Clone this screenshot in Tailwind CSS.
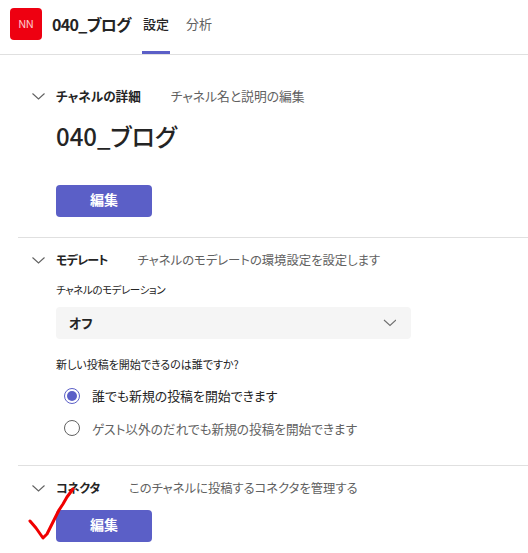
<!DOCTYPE html>
<html lang="ja">
<head>
<meta charset="utf-8">
<title>040_ブログ</title>
<script src="https://cdn.jsdelivr.net/npm/@tailwindcss/browser@4"></script>
</head>
<body class="bg-white text-[#242424] font-['Noto_Sans_CJK_JP','Noto_Sans',sans-serif] [font-feature-settings:'palt']">
<div class="relative w-[528px] h-[553px] overflow-hidden">

  <!-- header -->
  <header class="h-[55px] border-b border-[#e0e0e0] flex pl-[10px]">
    <div class="w-[32px] h-[32px] mt-[8px] rounded-[4px] bg-[#ee0011] text-white/80 text-[10px] flex items-center justify-center font-['Inter']">NN</div>
    <h1 class="ml-[10px] mt-[12px] w-[80px] whitespace-nowrap text-[16px] tracking-[-0.7px] leading-[24px] font-bold">040_ブログ</h1>
    <div class="relative ml-[10px] w-[28px] mt-[12px] text-[13px] leading-[23px] font-medium text-center">設定
      <div class="absolute left-0 right-0 top-[39px] h-[3px] bg-[#5b5fc7]"></div>
    </div>
    <div class="ml-[16px] mt-[12px] text-[13px] leading-[23px] text-[#616161]">分析</div>
  </header>

  <!-- channel details -->
  <section class="h-[183px] ml-[18px] border-b border-[#e0e0e0] pl-[14px] pt-[30px]">
    <div class="flex items-center h-[22px]">
      <svg class="w-[16px] h-[16px]" viewBox="0 0 16 16" fill="none" stroke="#616161" stroke-width="1.1"><path d="M0.5 5.5 6.5 11 12.5 5.5"/></svg>
      <span class="ml-[8px] text-[12.6px] font-bold">チャネルの詳細</span>
      <span class="ml-[30px] text-[12.8px] text-[#616161]">チャネル名と説明の編集</span>
    </div>
    <div class="ml-[24px] mt-[11px] text-[24px] leading-[36px] font-medium">040_ブログ</div>
    <button class="block ml-[24px] mt-[31px] w-[96px] h-[32px] pb-[3px] rounded-[4px] bg-[#5b5fc7] text-white text-[14px] font-bold">編集</button>
  </section>

  <!-- moderation -->
  <section class="h-[228px] ml-[18px] border-b border-[#e0e0e0] pl-[14px] pt-[11px]">
    <div class="flex items-center h-[22px]">
      <svg class="w-[16px] h-[16px]" viewBox="0 0 16 16" fill="none" stroke="#616161" stroke-width="1.1"><path d="M0.5 5.5 6.5 11 12.5 5.5"/></svg>
      <span class="ml-[8px] text-[12px] tracking-[-0.8px] font-bold">モデレート</span>
      <span class="ml-[30px] text-[12.35px] text-[#616161]">チャネルのモデレートの環境設定を設定します</span>
    </div>
    <div class="ml-[24px] mt-[11px] text-[10.5px] tracking-[-0.4px] leading-[16px]">チャネルのモデレーション</div>
    <div class="ml-[24px] mt-[9px] w-[355px] h-[32px] rounded-[4px] bg-[#f5f5f5] flex items-center justify-between pl-[13px] pr-[15px]">
      <span class="text-[13px] font-bold">オフ</span>
      <svg class="w-[14px] h-[14px]" viewBox="0 0 14 14" fill="none" stroke="#707070" stroke-width="1.1"><path d="M2 4 8 9.5 14 4"/></svg>
    </div>
    <div class="ml-[24px] mt-[17px] text-[11px] leading-[16px]">新しい投稿を開始できるのは誰ですか?</div>
    <div class="ml-[32px] mt-[14px] flex items-center h-[20px]">
      <span class="w-[16px] h-[16px] rounded-full border border-[#5b5fc7] flex items-center justify-center"><span class="w-[10px] h-[10px] rounded-full bg-[#5b5fc7]"></span></span>
      <span class="ml-[12px] text-[12.9px]">誰でも新規の投稿を開始できます</span>
    </div>
    <div class="ml-[32px] mt-[12px] flex items-center h-[20px]">
      <span class="w-[16px] h-[16px] rounded-full border border-[#616161]"></span>
      <span class="ml-[12px] text-[12.65px] text-[#616161]">ゲスト以外のだれでも新規の投稿を開始できます</span>
    </div>
  </section>

  <!-- connectors -->
  <section class="ml-[18px] pl-[14px] pt-[11px]">
    <div class="flex items-center h-[22px]">
      <svg class="w-[16px] h-[16px]" viewBox="0 0 16 16" fill="none" stroke="#616161" stroke-width="1.1"><path d="M0.5 5.5 6.5 11 12.5 5.5"/></svg>
      <span class="ml-[8px] text-[12px] tracking-[-0.2px] font-bold">コネクタ</span>
      <span class="ml-[29px] text-[12.3px] text-[#616161]">このチャネルに投稿するコネクタを管理する</span>
    </div>
    <button class="block ml-[24px] mt-[11px] w-[96px] h-[32px] pb-[3px] rounded-[4px] bg-[#5b5fc7] text-white text-[14px] font-bold">編集</button>
  </section>

  <!-- hand-drawn check mark over the page -->
  <svg class="absolute left-0 top-0 pointer-events-none" width="528" height="553" viewBox="0 0 528 553" fill="none" stroke="#f00000" stroke-width="3" stroke-linejoin="round" stroke-linecap="round"><path d="M30 521 36 528 43 538 47 534 54 520 59 510 63 504 67 497 73 489"/></svg>
</div>
</body>
</html>
